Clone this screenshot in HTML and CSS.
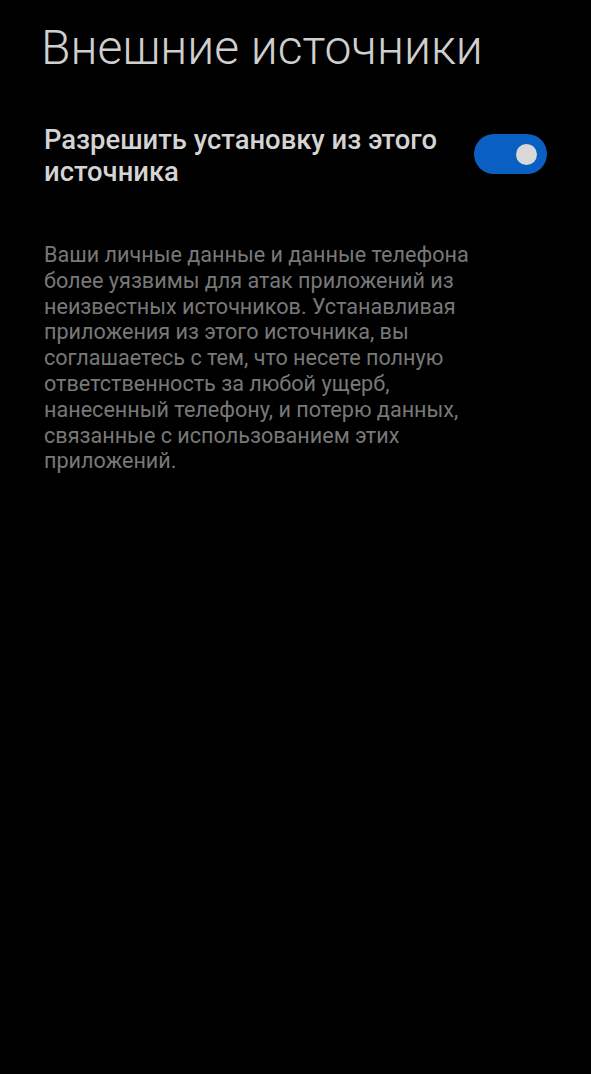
FILE: index.html
```html
<!DOCTYPE html>
<html lang="ru">
<head>
<meta charset="utf-8">
<link rel="stylesheet" href="styles.css">
</head>
<body>
<div class="page">
  <h1 class="title">Внешние источники</h1>
  <div class="setting">
    <div class="setting-label">Разрешить установку из этого источника</div>
    <div class="toggle"><div class="knob"></div></div>
  </div>
  <p class="desc">Ваши личные данные и данные телефона более уязвимы для атак приложений из неизвестных источников. Устанавливая приложения из этого источника, вы соглашаетесь с тем, что несете полную ответственность за любой ущерб, нанесенный телефону, и потерю данных, связанные с использованием этих приложений.</p>
</div>
</body>
</html>
```
FILE: styles.css
```css
html, body {
  margin: 0;
  padding: 0;
  background: #000;
}
.page {
  width: 591px;
  height: 1074px;
  box-sizing: border-box;
  padding: 19px 44px 0 41px;
  font-family: Roboto, "Noto Sans", sans-serif;
}
.title {
  margin: 0;
  font-weight: 300;
  font-size: 48px;
  line-height: 58px;
  color: #cfcfcf;
}
.setting {
  display: flex;
  align-items: flex-start;
  justify-content: space-between;
  margin-top: 47px;
  padding-left: 3px;
}
.setting-label {
  width: 410px;
  font-weight: 500;
  font-size: 27.4px;
  line-height: 32px;
  color: #d4d4d4;
}
.toggle {
  margin-top: 10px;
  width: 73px;
  height: 40px;
  border-radius: 20px;
  background: #0a5fc2;
  display: flex;
  align-items: center;
  justify-content: flex-end;
  padding-right: 10px;
  box-sizing: border-box;
}
.knob {
  width: 21px;
  height: 21px;
  border-radius: 50%;
  background: #d9d9d9;
}
.desc {
  margin: 54px 0 0 3px;
  font-size: 21.6px;
  line-height: 25.8px;
  color: #787878;
  width: 466px;
}
```
